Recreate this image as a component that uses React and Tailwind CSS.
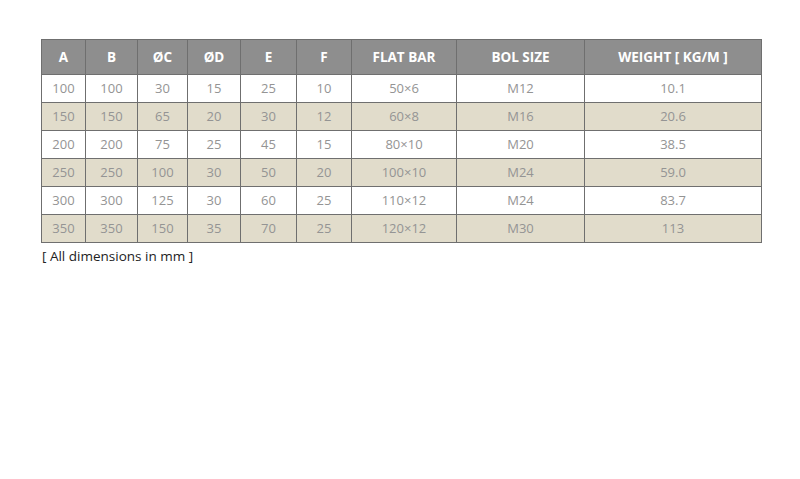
const columns = [
    { label: 'A', width: 44 },
    { label: 'B', width: 52 },
    { label: 'ØC', width: 50 },
    { label: 'ØD', width: 53 },
    { label: 'E', width: 56 },
    { label: 'F', width: 55 },
    { label: 'FLAT BAR', width: 105 },
    { label: 'BOL SIZE', width: 128 },
    { label: 'WEIGHT [ KG/M ]', width: 177 },
];

const rows = [
    ['100', '100', '30', '15', '25', '10', '50×6', 'M12', '10.1'],
    ['150', '150', '65', '20', '30', '12', '60×8', 'M16', '20.6'],
    ['200', '200', '75', '25', '45', '15', '80×10', 'M20', '38.5'],
    ['250', '250', '100', '30', '50', '20', '100×10', 'M24', '59.0'],
    ['300', '300', '125', '30', '60', '25', '110×12', 'M24', '83.7'],
    ['350', '350', '150', '35', '70', '25', '120×12', 'M30', '113'],
];

export default function App() {
    return (
        <div className="min-h-[479px] w-[800px] bg-white pl-[41px] pt-[39px] font-['Open_Sans',sans-serif]">
            <table className="table-fixed border-collapse border border-[#7a7a7a]">
                <colgroup>
                    {columns.map((c) => (
                        <col key={c.label} style={{ width: c.width }} />
                    ))}
                </colgroup>
                <thead>
                    <tr className="h-[35px] bg-[#8e8e8e]">
                        {columns.map((c) => (
                            <th
                                key={c.label}
                                className="border border-[#6f6f6f] p-0 pt-px text-center text-[13.5px] font-bold text-white"
                            >
                                {c.label}
                            </th>
                        ))}
                    </tr>
                </thead>
                <tbody>
                    {rows.map((row, i) => (
                        <tr
                            key={i}
                            className={i % 2 === 1 ? 'h-[28px] bg-[#e1dccb]' : 'h-[28px] bg-white'}
                        >
                            {row.map((cell, j) => (
                                <td
                                    key={j}
                                    className="border border-[#6f6f6f] p-0 text-center text-[13px] text-[#949494]"
                                >
                                    {cell}
                                </td>
                            ))}
                        </tr>
                    ))}
                </tbody>
            </table>
            <p className="mt-[3px] pl-px text-[13.5px] text-[#222]">[ All dimensions in mm ]</p>
        </div>
    );
}
